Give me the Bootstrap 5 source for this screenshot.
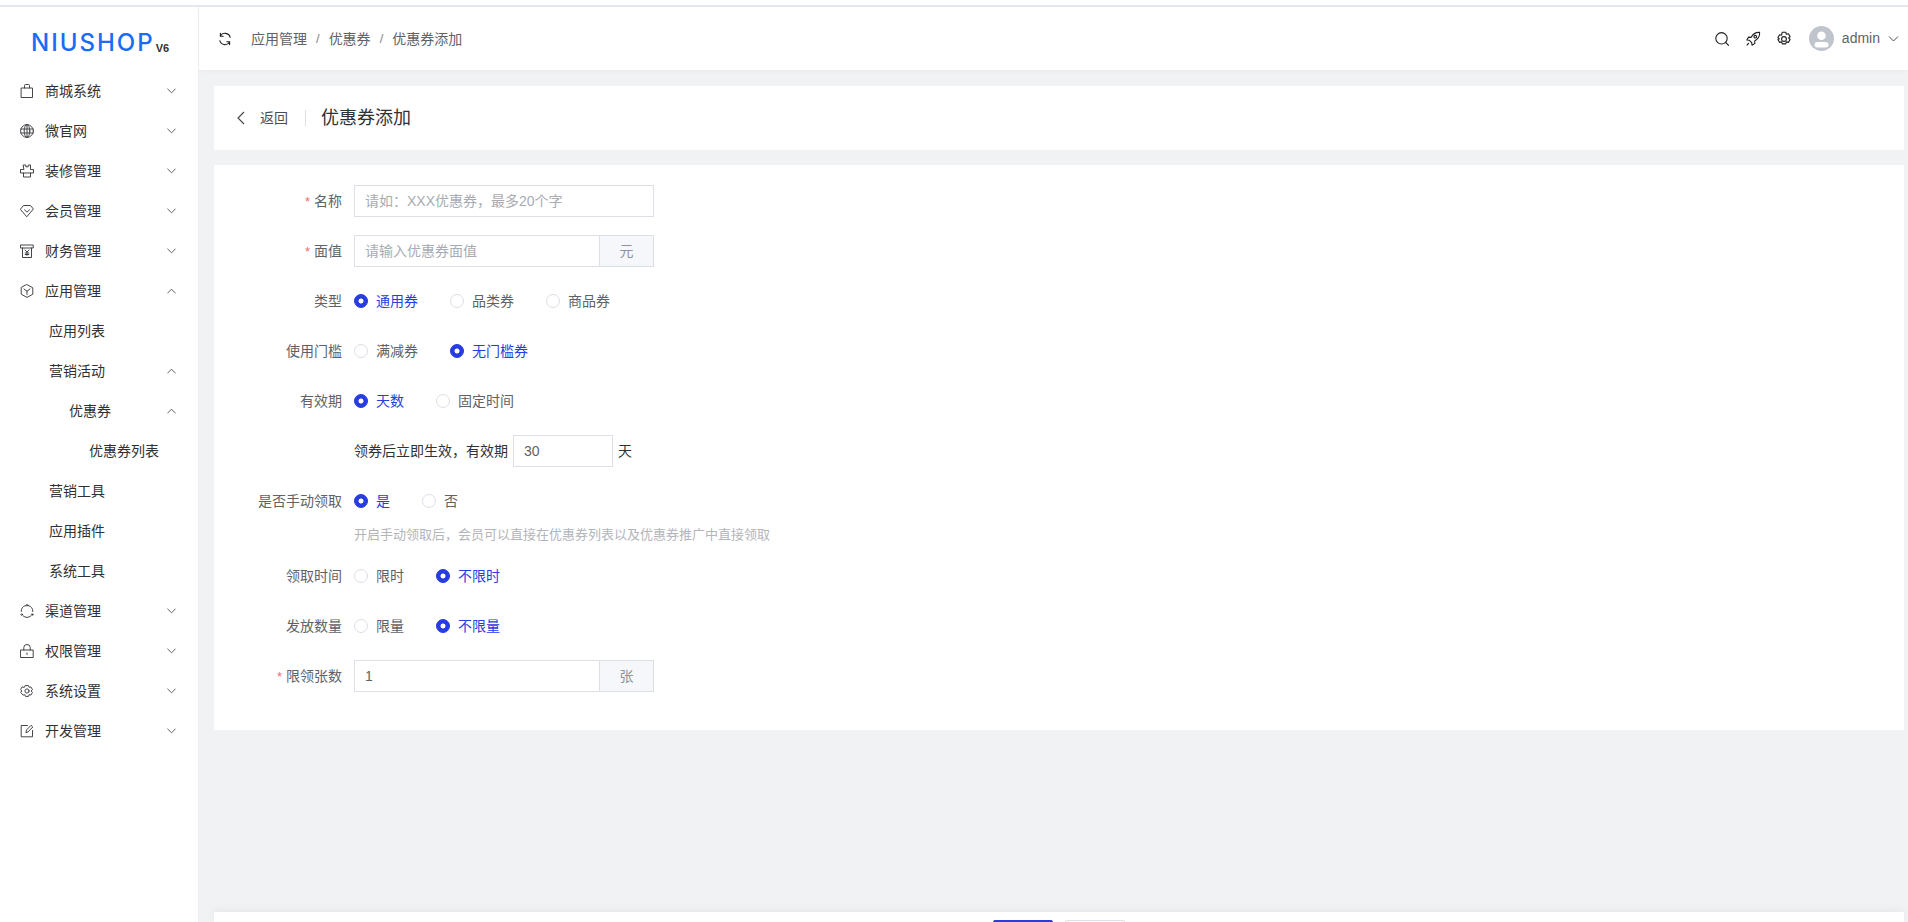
<!DOCTYPE html>
<html lang="zh-CN">
<head>
<meta charset="utf-8">
<title>优惠券添加</title>
<link href="https://cdn.jsdelivr.net/npm/bootstrap@5.3.0/dist/css/bootstrap.min.css" rel="stylesheet">
<style>
html,body{height:100%;overflow:hidden}
body{font-family:"Liberation Sans","Noto Sans CJK SC",sans-serif;font-size:14px;color:#303133;background:#fff}
.top-strip{height:7px;border-bottom:2px solid #e4e7ed;background:#fff}
.app-shell{height:915px}
.side-pane{width:199px;flex:none;border-right:1px solid #eef0f5;background:#fff}
.logo-row{height:64px;padding-left:31px;padding-top:8px;gap:1px}
.logo-word{font-family:Inter,sans-serif;font-weight:500;font-size:24px;letter-spacing:2px;color:#1a6cf6;line-height:1}
.logo-ver{font-family:"Liberation Sans",sans-serif;font-weight:700;font-size:11px;color:#303133;line-height:1;margin-top:10px}
.menu-link{height:40px;padding:0 22px 0 20px;color:#303133;gap:11px;font-size:14px;line-height:20px}
.menu-link:hover{color:#303133}
.lvl-2{padding-left:49px}
.lvl-3{padding-left:69px}
.lvl-4{padding-left:89px}
.mi{width:14px;height:14px;flex:none;fill:none;stroke:#3a3c40;stroke-width:.95;stroke-linejoin:round;stroke-linecap:round}
.chev{width:9px;height:6px;flex:none;fill:none;stroke:#4a4c50;stroke-width:1;margin-left:auto}
.main-pane{min-width:0;background:#f1f2f4}
.head-bar{height:63px;flex:none;background:#fff;padding:0 9px 0 18px;box-shadow:0 1px 4px rgba(0,21,41,.04);z-index:2}
.crumbs{color:#606266;gap:9px;margin-left:18px;padding-top:1px}
.crumb-sep{color:#85878c;font-size:13px}
.hi{width:16px;height:16px;fill:none;stroke:#202124;stroke-width:1.1;stroke-linecap:round;stroke-linejoin:round}
.tools{gap:15px}
.avatar-dot{width:25px;height:25px;background:#c0c4cc;margin-left:2px;overflow:hidden}
.user-name{color:#606266;margin-left:-7px}
.user-chev{width:11px;height:6px;margin-left:-7px}
.scroll-pane{padding:16px 4px 0 15px;min-height:0;overflow:hidden}
.title-card{height:64px;background:#fff;padding-left:23px;margin-bottom:15px}
.back-chev{width:8px;height:14px;fill:none;stroke:#404246;stroke-width:1.1}
.back-text{margin-left:15px;color:#4b4d52}
.title-sep{width:1px;height:16px;background:#dcdfe6;margin:0 15px 0 17px}
.page-title{font-size:18px;color:#303133;font-weight:400;margin:0;line-height:24px}
.form-card{height:565px;background:#fff;padding-top:20px}
.field-row{min-height:32px;margin-bottom:18px}
.field-row.tight{margin-bottom:0}
.field-label{width:140px;flex:none;padding-right:12px;text-align:right;color:#606266;line-height:32px;height:32px}
.req{color:#f56c6c;margin-right:4px;font-size:13px;line-height:1}
.field-body{min-height:32px}
.opts{gap:32px;height:32px}
.opt{gap:8px;color:#606266;line-height:20px;cursor:pointer}
.opt.on{color:#273ce2}
.radio-dot{width:14px;height:14px;border:1px solid #dcdfe6;flex:none}
.radio-dot:checked[type=radio]{background-color:#273ce2;border-color:#273ce2;background-image:radial-gradient(circle,#fff 2.2px,transparent 2.8px)}
.ctl-wrap{width:300px}
.ctl-wrap .form-control,.days-input{height:32px;min-height:32px;padding:0 10px;font-size:14px;color:#606266;border:1px solid #dcdfe6;border-radius:0;box-shadow:none}
.ctl-wrap .input-group-text{width:55px;justify-content:center;padding:0;font-size:14px;color:#909399;background:#f5f7fa;border:1px solid #dcdfe6;border-radius:0}
.form-control::placeholder{color:#a8abb2}
.days-input{width:100px;margin:0 5px}
.hint-line{padding-left:140px;height:20px;margin-top:8px;margin-bottom:15px;font-size:13px;color:#b3b5ba;line-height:20px}
.foot-bar{height:10px;flex:none;background:#fff;margin:0 4px 0 15px;padding-top:8px;gap:12px;overflow:hidden;box-shadow:0 -2px 8px rgba(0,0,0,.05);align-items:flex-start}
.btn-save,.btn-back{width:60px;height:32px;padding:0;border-radius:2px;flex:none}
.btn-save{background:#273ce2;border:1px solid #273ce2}
.btn-back{background:#fff;border:1px solid #dcdfe6}
</style>
</head>
<body>
<svg width="0" height="0" class="position-absolute">
  <symbol id="c-down" viewBox="0 0 10 6"><path d="M.5.5 5 5 9.5.5"/></symbol>
  <symbol id="c-up" viewBox="0 0 10 6"><path d="M.5 5.5 5 1l4.500 4.500"/></symbol>
</svg>
<div class="top-strip"></div>
<div class="app-shell d-flex">
  <aside class="side-pane">
    <div class="logo-row d-flex align-items-center"><span class="logo-word">NIUSHOP</span><span class="logo-ver">V6</span></div>
    <nav class="nav flex-column">
      <a class="nav-link menu-link d-flex align-items-center" href="#"><svg class="mi" viewBox="0 0 14 14"><path d="M1.500 4h11v9.500h-11zM4.500 4V1.500a1 1 0 0 1 1-1h3a1 1 0 0 1 1 1V4"/></svg>商城系统<svg class="chev"><use href="#c-down"/></svg></a>
      <a class="nav-link menu-link d-flex align-items-center" href="#"><svg class="mi" viewBox="0 0 14 14"><circle cx="7" cy="7" r="6.400"/><ellipse cx="7" cy="7" rx="2.800" ry="6.400"/><path d="M.8 5h12.400M.8 9h12.400M7 .6v12.800"/></svg>微官网<svg class="chev"><use href="#c-down"/></svg></a>
      <a class="nav-link menu-link d-flex align-items-center" href="#"><svg class="mi" viewBox="0 0 14 14"><path d="M3.500 1h2.300v1.800h2.400V1h2.300v4.500H13.500v3.500H.5V5.500h3zM3.500 9v4h7V9"/></svg>装修管理<svg class="chev"><use href="#c-down"/></svg></a>
      <a class="nav-link menu-link d-flex align-items-center" href="#"><svg class="mi" viewBox="0 0 14 14"><path d="M.6 5 3.500 1.500h7L13.400 5 7 12.500zM4.500 5.800 7 8.200l2.500-2.400"/></svg>会员管理<svg class="chev"><use href="#c-down"/></svg></a>
      <a class="nav-link menu-link d-flex align-items-center" href="#"><svg class="mi" viewBox="0 0 14 14"><path d="M.8 1h12.400v3H.8zM2.500 4v9.500h9V4M5 6l2 2 2-2M7 8v3.500M5.200 9h3.600M5.200 10.500h3.600"/></svg>财务管理<svg class="chev"><use href="#c-down"/></svg></a>
      <a class="nav-link menu-link d-flex align-items-center" href="#"><svg class="mi" viewBox="0 0 14 14"><path d="M7 .6 12.800 3.800v6.400L7 13.400 1.200 10.200V3.800zM4 5l3 2.200L10 5M7 7.200v3.300"/></svg>应用管理<svg class="chev"><use href="#c-up"/></svg></a>
      <a class="nav-link menu-link lvl-2 d-flex align-items-center" href="#">应用列表</a>
      <a class="nav-link menu-link lvl-2 d-flex align-items-center" href="#">营销活动<svg class="chev"><use href="#c-up"/></svg></a>
      <a class="nav-link menu-link lvl-3 d-flex align-items-center" href="#">优惠券<svg class="chev"><use href="#c-up"/></svg></a>
      <a class="nav-link menu-link lvl-4 d-flex align-items-center" href="#">优惠券列表</a>
      <a class="nav-link menu-link lvl-2 d-flex align-items-center" href="#">营销工具</a>
      <a class="nav-link menu-link lvl-2 d-flex align-items-center" href="#">应用插件</a>
      <a class="nav-link menu-link lvl-2 d-flex align-items-center" href="#">系统工具</a>
      <a class="nav-link menu-link d-flex align-items-center" href="#"><svg class="mi" viewBox="0 0 14 14"><path d="M5.600 1.600A5.800 5.800 0 0 0 1.200 7.500M8.400 1.600a5.800 5.800 0 0 1 4.400 5.900M3.300 12a5.800 5.800 0 0 0 7.400 0"/><circle cx="7" cy="1.300" r=".8"/><circle cx="1.800" cy="10.600" r=".8"/><circle cx="12.200" cy="10.600" r=".8"/></svg>渠道管理<svg class="chev"><use href="#c-down"/></svg></a>
      <a class="nav-link menu-link d-flex align-items-center" href="#"><svg class="mi" viewBox="0 0 14 14"><path d="M.8 6h12.400v7.500H.8zM3.800 6V3.500a3.200 3 0 0 1 6.400 0V6M7 9v1.500"/></svg>权限管理<svg class="chev"><use href="#c-down"/></svg></a>
      <a class="nav-link menu-link d-flex align-items-center" href="#"><svg class="mi" viewBox="0 0 14 14"><path d="M5.500.6h3l.6 1.700 1.800-.4 1.500 2.600-1.200 1.500 1.200 1.500-1.500 2.600-1.800-.4-.6 1.700h-3l-.6-1.700-1.800.4L.6 7.500 1.800 6 .6 4.500l1.500-2.600 1.800.4z" transform="translate(0 1)"/><circle cx="7" cy="7" r="2.100"/></svg>系统设置<svg class="chev"><use href="#c-down"/></svg></a>
      <a class="nav-link menu-link d-flex align-items-center" href="#"><svg class="mi" viewBox="0 0 14 14"><path d="M7.500 1.500H1.200v11.300h11.300V6.500M6 8.300l.5-2.300L11 1.300l1.800 1.700L8.300 7.700z"/></svg>开发管理<svg class="chev"><use href="#c-down"/></svg></a>
    </nav>
  </aside>
  <div class="main-pane flex-grow-1 d-flex flex-column">
    <header class="head-bar d-flex align-items-center">
      <svg class="hi" viewBox="0 0 16 16"><path d="M13.200 6.300A5.500 5.500 0 0 0 3.200 5M2.800 9.700a5.500 5.500 0 0 0 10 1.300M3.400 2.400v2.800h2.800M12.600 13.600v-2.800H9.800"/></svg>
      <div class="crumbs d-flex align-items-center"><span>应用管理</span><span class="crumb-sep">/</span><span>优惠券</span><span class="crumb-sep">/</span><span>优惠券添加</span></div>
      <div class="tools d-flex align-items-center ms-auto">
        <svg class="hi" viewBox="0 0 16 16"><circle cx="7.500" cy="7.300" r="5.700"/><path d="m11.700 11.500 2.800 2.800"/></svg>
        <svg class="hi" viewBox="0 0 16 16"><path d="M14.600 1.400c-3.800-.3-6.400 1-8.600 5l-2.400-.3L1.800 9l2.600.3 2.300 2.300.3 2.600 2.900-1.800-.3-2.400c4-2.200 5.300-4.800 5-8.600zM3.700 12.300 2 14"/><circle cx="10.300" cy="5.700" r="1.300"/></svg>
        <svg class="hi" viewBox="0 0 16 16"><path d="M6.300 1.200h3.400l.7 2 2-.5 1.700 2.900-1.400 1.400 1.400 1.500-1.700 2.900-2-.5-.7 2H6.300l-.7-2-2 .5-1.700-2.900L3.300 8 1.900 6.600l1.700-2.900 2 .5z"/><circle cx="8" cy="8" r="2.400"/></svg>
        <div class="avatar-dot rounded-circle d-flex"><svg width="25" height="25" viewBox="0 0 25 25"><circle cx="12.500" cy="9.800" r="4.300" fill="#fff"/><rect x="5.500" y="16" width="14" height="5.500" rx="2.700" fill="#fff"/></svg></div>
        <span class="user-name">admin</span>
        <svg class="chev user-chev" viewBox="0 0 10 6"><path d="M.5.500 5 5 9.500.500"/></svg>
      </div>
    </header>
    <main class="scroll-pane flex-grow-1">
      <section class="title-card d-flex align-items-center">
        <svg class="back-chev" viewBox="0 0 8 14"><path d="M7 1 1 7l6 6"/></svg>
        <span class="back-text">返回</span><span class="title-sep"></span>
        <h1 class="page-title">优惠券添加</h1>
      </section>
      <form class="form-card">
        <div class="field-row d-flex"><div class="field-label"><span class="req">*</span>名称</div><div class="field-body"><div class="ctl-wrap"><input class="form-control" placeholder="请如：XXX优惠券，最多20个字"></div></div></div>
        <div class="field-row d-flex"><div class="field-label"><span class="req">*</span>面值</div><div class="field-body"><div class="ctl-wrap input-group"><input class="form-control" placeholder="请输入优惠券面值"><span class="input-group-text">元</span></div></div></div>
        <div class="field-row d-flex"><div class="field-label">类型</div><div class="opts d-flex"><label class="opt on d-flex align-items-center"><input class="form-check-input radio-dot m-0" type="radio" name="a" checked>通用券</label><label class="opt d-flex align-items-center"><input class="form-check-input radio-dot m-0" type="radio" name="a">品类券</label><label class="opt d-flex align-items-center"><input class="form-check-input radio-dot m-0" type="radio" name="a">商品券</label></div></div>
        <div class="field-row d-flex"><div class="field-label">使用门槛</div><div class="opts d-flex"><label class="opt d-flex align-items-center"><input class="form-check-input radio-dot m-0" type="radio" name="b">满减券</label><label class="opt on d-flex align-items-center"><input class="form-check-input radio-dot m-0" type="radio" name="b" checked>无门槛券</label></div></div>
        <div class="field-row d-flex"><div class="field-label">有效期</div><div class="opts d-flex"><label class="opt on d-flex align-items-center"><input class="form-check-input radio-dot m-0" type="radio" name="c" checked>天数</label><label class="opt d-flex align-items-center"><input class="form-check-input radio-dot m-0" type="radio" name="c">固定时间</label></div></div>
        <div class="field-row d-flex"><div class="field-label"></div><div class="field-body d-flex align-items-center"><span>领券后立即生效，有效期</span><input class="form-control days-input" value="30"><span>天</span></div></div>
        <div class="field-row tight d-flex"><div class="field-label">是否手动领取</div><div class="opts d-flex"><label class="opt on d-flex align-items-center"><input class="form-check-input radio-dot m-0" type="radio" name="d" checked>是</label><label class="opt d-flex align-items-center"><input class="form-check-input radio-dot m-0" type="radio" name="d">否</label></div></div>
        <div class="hint-line">开启手动领取后，会员可以直接在优惠券列表以及优惠券推广中直接领取</div>
        <div class="field-row d-flex"><div class="field-label">领取时间</div><div class="opts d-flex"><label class="opt d-flex align-items-center"><input class="form-check-input radio-dot m-0" type="radio" name="e">限时</label><label class="opt on d-flex align-items-center"><input class="form-check-input radio-dot m-0" type="radio" name="e" checked>不限时</label></div></div>
        <div class="field-row d-flex"><div class="field-label">发放数量</div><div class="opts d-flex"><label class="opt d-flex align-items-center"><input class="form-check-input radio-dot m-0" type="radio" name="f">限量</label><label class="opt on d-flex align-items-center"><input class="form-check-input radio-dot m-0" type="radio" name="f" checked>不限量</label></div></div>
        <div class="field-row d-flex"><div class="field-label"><span class="req">*</span>限领张数</div><div class="field-body"><div class="ctl-wrap input-group"><input class="form-control" value="1"><span class="input-group-text">张</span></div></div></div>
      </form>
    </main>
    <footer class="foot-bar d-flex justify-content-center">
      <button type="button" class="btn btn-save"></button>
      <button type="button" class="btn btn-back"></button>
    </footer>
  </div>
</div>
<script src="https://cdn.jsdelivr.net/npm/bootstrap@5.3.0/dist/js/bootstrap.bundle.min.js"></script>
</body>
</html>
